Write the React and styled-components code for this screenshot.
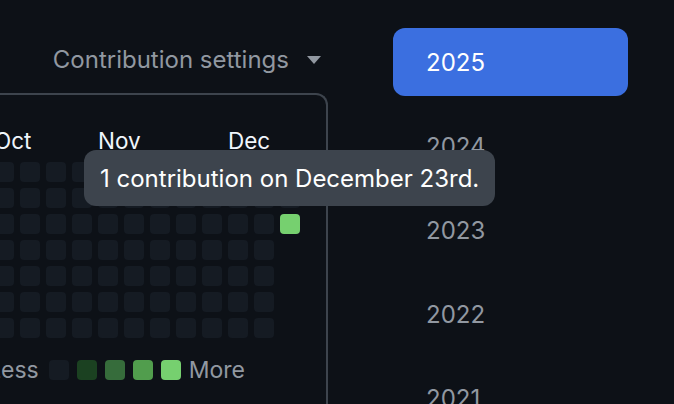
import React from "react";
import styled, { createGlobalStyle } from "styled-components";

const GlobalStyle = createGlobalStyle`
  html, body {
    margin: 0;
    padding: 0;
    background: #0d1117;
  }
  body {
    font-family: Inter, "Noto Sans", sans-serif;
    overflow: hidden;
  }
`;

const Page = styled.div`
  position: relative;
  display: flex;
  width: 674px;
  height: 404px;
  overflow: hidden;
  background: #0d1117;
`;

const LeftColumn = styled.div`
  flex: none;
  width: 368px;
  margin-left: -40px;
  display: flex;
  flex-direction: column;
`;

const Header = styled.div`
  height: 93px;
  box-sizing: border-box;
  padding: 44px 7px 0 0;
  display: flex;
  justify-content: flex-end;
  align-items: flex-start;
`;

const SettingsButton = styled.button`
  display: flex;
  align-items: center;
  gap: 18px;
  background: none;
  border: none;
  padding: 0;
  color: #9198a1;
  font-family: inherit;
  font-size: 24px;
  line-height: 32px;
  cursor: pointer;
`;

const Caret = styled.span`
  width: 0;
  height: 0;
  border-left: 7px solid transparent;
  border-right: 7px solid transparent;
  border-top: 8px solid #9198a1;
`;

const GraphBox = styled.div`
  flex: 1;
  border: 2px solid #3d444d;
  border-bottom: none;
  border-radius: 12px 12px 0 0;
  padding: 32px 26px 0 6px;
`;

const Grid = styled.div`
  display: grid;
  grid-template-columns: repeat(13, 20px);
  column-gap: 6px;
`;

const MonthRow = styled(Grid)`
  height: 28px;
  margin-bottom: 7px;
`;

const Month = styled.span`
  grid-column: ${(p) => p.$col};
  grid-row: 1;
  color: #f0f6fc;
  font-size: 22.5px;
  line-height: 28px;
  white-space: nowrap;
`;

const CellGrid = styled(Grid)`
  grid-template-rows: repeat(7, 20px);
  grid-auto-flow: column;
  row-gap: 6px;
`;

const levels = ["#151b23", "#1b4121", "#366c3b", "#519d4d", "#76d06f"];

const Cell = styled.div`
  flex: none;
  width: 20px;
  height: 20px;
  border-radius: 4px;
  background: ${(p) => levels[p.$level || 0]};
`;

const Legend = styled.div`
  display: flex;
  align-items: center;
  gap: 8px;
  margin: 18px 0 0 20px;
`;

const LegendText = styled.span`
  color: #9198a1;
  font-size: 23px;
  line-height: 28px;
  margin-right: ${(p) => (p.$first ? "2px" : "0")};
`;

const YearList = styled.ul`
  list-style: none;
  margin: 28px 0 0 65px;
  padding: 0;
  display: flex;
  flex-direction: column;
  gap: 16px;
`;

const YearButton = styled.li`
  flex: none;
  width: 235px;
  height: 68px;
  box-sizing: border-box;
  padding-left: 33px;
  display: flex;
  align-items: center;
  border-radius: 12px;
  font-size: 24px;
  background: ${(p) => (p.$active ? "#3b6fe0" : "transparent")};
  color: ${(p) => (p.$active ? "#ffffff" : "#9198a1")};
`;

const Tooltip = styled.div`
  position: absolute;
  left: 84px;
  top: 150px;
  height: 56px;
  box-sizing: border-box;
  padding: 0 16px;
  display: flex;
  align-items: center;
  background: #3d444d;
  border-radius: 12px;
  color: #ffffff;
  font-size: 24px;
  white-space: nowrap;
`;

const months = [
  { name: "Oct", col: 2 },
  { name: "Nov", col: 6 },
  { name: "Dec", col: 11 },
];

const years = ["2025", "2024", "2023", "2022", "2021"];

function buildCells() {
  const cells = [];
  for (let week = 0; week < 13; week++) {
    const days = week === 12 ? 3 : 7;
    for (let day = 0; day < days; day++) {
      const level = week === 12 && day === 2 ? 4 : 0;
      cells.push(<Cell key={`${week}-${day}`} $level={level} />);
    }
    if (week === 12) {
      for (let day = 3; day < 7; day++) {
        cells.push(<span key={`${week}-${day}`} />);
      }
    }
  }
  return cells;
}

export default function App() {
  return (
    <>
      <GlobalStyle />
      <Page>
        <LeftColumn>
          <Header>
            <SettingsButton>
              Contribution settings
              <Caret />
            </SettingsButton>
          </Header>
          <GraphBox>
            <MonthRow>
              {months.map((m) => (
                <Month key={m.name} $col={m.col}>
                  {m.name}
                </Month>
              ))}
            </MonthRow>
            <CellGrid>{buildCells()}</CellGrid>
            <Legend>
              <LegendText $first>Less</LegendText>
              {levels.map((c, i) => (
                <Cell key={c} $level={i} />
              ))}
              <LegendText>More</LegendText>
            </Legend>
          </GraphBox>
        </LeftColumn>
        <YearList>
          {years.map((y, i) => (
            <YearButton key={y} $active={i === 0}>
              {y}
            </YearButton>
          ))}
        </YearList>
        <Tooltip>1 contribution on December 23rd.</Tooltip>
      </Page>
    </>
  );
}
